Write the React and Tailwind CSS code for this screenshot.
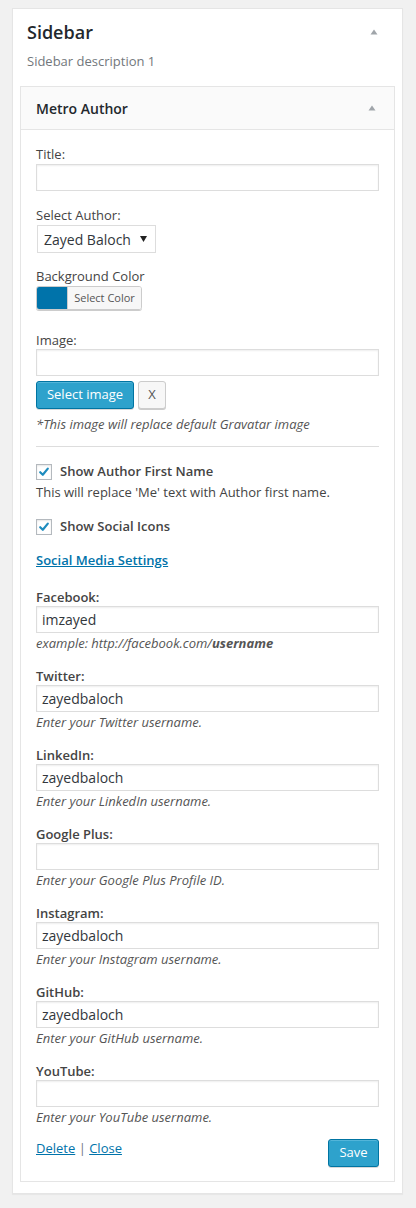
import React from "react";

const FONT = "font-['Open_Sans','Noto_Sans',sans-serif]";

function Caret() {
  return (
    <svg width="8" height="6" viewBox="0 0 8 6" className="block">
      <path d="M4 0.5 L7.5 5.5 L0.5 5.5 Z" fill="#a0a5aa" />
    </svg>
  );
}

function Checkbox() {
  return (
    <span className="flex h-4 w-4 shrink-0 items-center justify-center border border-[#b4b9be] bg-white shadow-[inset_0_1px_2px_rgba(0,0,0,0.1)]">
      <svg width="12" height="12" viewBox="0 0 12 12">
        <path d="M2.2 6.2 L4.8 8.8 L9.8 2.6" fill="none" stroke="#1e8cbe" strokeWidth="2.2" strokeLinecap="round" strokeLinejoin="round" />
      </svg>
    </span>
  );
}

function TextBox({ value }) {
  return (
    <div className="flex h-[27px] w-full items-center border border-[#ddd] bg-white pl-[5px] text-[14px] text-[#32373c] shadow-[inset_0_1px_2px_rgba(0,0,0,0.07)]">
      {value}
    </div>
  );
}

function SocialField({ label, value, help }) {
  return (
    <div className="mt-[15px] first:mt-0">
      <div className="text-[13px] font-semibold leading-[18px] text-[#444]">{label}</div>
      <TextBox value={value} />
      <div className="mt-px text-[13px] italic leading-[18px] text-[#555]">{help}</div>
    </div>
  );
}

const socials = [
  { label: "Twitter:", value: "zayedbaloch", help: "Enter your Twitter username." },
  { label: "LinkedIn:", value: "zayedbaloch", help: "Enter your LinkedIn username." },
  { label: "Google Plus:", value: "", help: "Enter your Google Plus Profile ID." },
  { label: "Instagram:", value: "zayedbaloch", help: "Enter your Instagram username." },
  { label: "GitHub:", value: "zayedbaloch", help: "Enter your GitHub username." },
  { label: "YouTube:", value: "", help: "Enter your YouTube username." },
];

export default function App() {
  return (
    <div className={`${FONT} min-h-[1208px] w-[416px] bg-[#f1f1f1] pt-[8px]`}>
      <div className="ml-[12px] w-[391px] border border-[#e5e5e5] bg-white px-[7px] pb-[11px] pt-[11px] shadow-[0_1px_1px_rgba(0,0,0,0.04)]">
        {/* sidebar header */}
        <div className="flex items-center justify-between pl-[7px] pr-[17px]">
          <h2 className="text-[18px] font-semibold leading-[24px] text-[#23282d]">Sidebar</h2>
          <Caret />
        </div>
        <div className="mt-2 pl-[7px] text-[13px] leading-[19px] text-[#72777c]">Sidebar description 1</div>

        {/* widget */}
        <div className="mt-[15px] border border-[#e5e5e5] bg-white">
          <div className="flex h-[43px] items-center justify-between border-b border-[#e5e5e5] bg-[#fafafa] pl-[15px] pr-[18px]">
            <span className="text-[14px] font-semibold text-[#23282d]">Metro Author</span>
            <Caret />
          </div>

          <div className="px-[15px] pb-[14px] pt-[15px] text-[#444]">
            <div className="text-[13px] leading-[18px]">Title:</div>
            <div className="mt-px">
              <TextBox value="" />
            </div>

            <div className="mt-[15px] text-[13px] leading-[18px]">Select Author:</div>
            <div className="ml-px mt-px flex h-[28px] w-[119px] items-center justify-between border border-[#ddd] bg-white pl-[6px] pr-[8px] text-[14px] text-[#32373c]">
              <span>Zayed Baloch</span>
              <svg width="7" height="6" viewBox="0 0 7 6">
                <path d="M0 0 L7 0 L3.5 6 Z" fill="#222" />
              </svg>
            </div>

            <div className="mt-[14px] text-[13px] leading-[18px]">Background Color</div>
            <div className="mt-px flex h-[24px] w-[106px] overflow-hidden rounded-[3px] border border-[#ccc] shadow-[0_1px_0_#ccc]">
              <span className="w-[30px] bg-[#0073aa]" />
              <span className="flex flex-1 items-center justify-center border-l border-[#ccc] bg-[#f7f7f7] text-[11px] text-[#555]">
                Select Color
              </span>
            </div>

            <div className="mt-[21px] text-[13px] leading-[18px]">Image:</div>
            <TextBox value="" />
            <div className="mt-[5px] flex gap-[4px]">
              <button className="h-[28px] w-[98px] rounded-[3px] border border-[#0074a2] bg-[#2ea2cc] text-[13px] text-white shadow-[inset_0_1px_0_rgba(120,200,230,0.5),0_1px_0_rgba(0,0,0,0.15)]">
                Select image
              </button>
              <button className="h-[28px] w-[28px] rounded-[3px] border border-[#ccc] bg-[#f7f7f7] text-[13px] text-[#555] shadow-[0_1px_0_#ccc]">
                X
              </button>
            </div>
            <div className="mt-[6px] text-[13px] italic leading-[18px] text-[#555]">
              *This image will replace default Gravatar image
            </div>

            <hr className="mt-[13px] border-t border-[#ddd]" />

            <div className="mt-[16px] flex h-[18px] items-center gap-[8px]">
              <Checkbox />
              <span className="text-[13px] font-semibold">Show Author First Name</span>
            </div>
            <div className="mt-[2px] text-[13px] leading-[18px]">This will replace 'Me' text with Author first name.</div>

            <div className="mt-[17px] flex h-[18px] items-center gap-[8px]">
              <Checkbox />
              <span className="text-[13px] font-semibold">Show Social Icons</span>
            </div>

            <div className="mt-[15px] text-[13px] font-semibold leading-[18px]">
              <a className="text-[#0073aa] underline">Social Media Settings</a>
            </div>

            <div className="mt-[19px]">
              <div className="text-[13px] font-semibold leading-[18px] text-[#444]">Facebook:</div>
              <TextBox value="imzayed" />
              <div className="mt-px text-[13px] italic leading-[18px] text-[#555]">
                example: http://facebook.com/<b className="font-bold">username</b>
              </div>
            </div>

            <div className="mt-[15px]">
              {socials.map((s) => (
                <SocialField key={s.label} {...s} />
              ))}
            </div>

            <div className="mt-[13px] flex items-start justify-between">
              <div className="text-[13px] leading-[18px] text-[#72777c]">
                <a className="text-[#0073aa] underline">Delete</a> | <a className="text-[#0073aa] underline">Close</a>
              </div>
              <button className="h-[28px] w-[51px] rounded-[3px] border border-[#0074a2] bg-[#2ea2cc] text-[13px] text-white shadow-[inset_0_1px_0_rgba(120,200,230,0.5),0_1px_0_rgba(0,0,0,0.15)]">
                Save
              </button>
            </div>
          </div>
        </div>
      </div>
    </div>
  );
}
